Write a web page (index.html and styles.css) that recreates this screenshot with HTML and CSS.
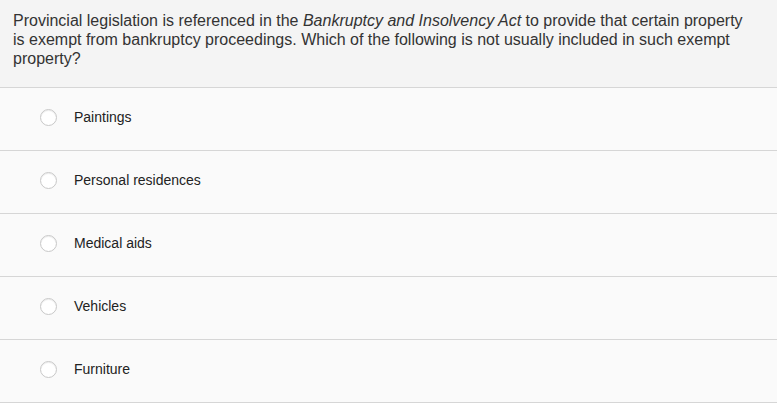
FILE: index.html
```html
<!DOCTYPE html>
<html>
<head>
<meta charset="utf-8">
<link rel="stylesheet" href="styles.css">
</head>
<body>
<div class="question">
  <div class="stem">Provincial legislation is referenced in the <em>Bankruptcy and Insolvency Act</em> to provide that certain property is exempt from bankruptcy proceedings. Which of the following is not usually included in such exempt property?</div>
  <ul class="options">
    <li class="option"><span class="radio"></span><span class="label">Paintings</span></li>
    <li class="option"><span class="radio"></span><span class="label">Personal residences</span></li>
    <li class="option"><span class="radio"></span><span class="label">Medical aids</span></li>
    <li class="option"><span class="radio"></span><span class="label">Vehicles</span></li>
    <li class="option"><span class="radio"></span><span class="label">Furniture</span></li>
  </ul>
</div>
</body>
</html>
```
FILE: styles.css
```css
html, body {
  margin: 0;
  padding: 0;
  background: #ffffff;
}
body {
  font-family: "Liberation Sans", Arial, sans-serif;
  color: #333333;
}
.question {
  width: 777px;
  background: #fafafa;
}
.stem {
  background: #f4f4f4;
  height: 88px;
  box-sizing: border-box;
  padding: 11px 30px 0 13px;
  font-size: 16px;
  line-height: 19px;
  color: #333333;
  border-bottom: 1px solid #d6d6d6;
}
.stem em {
  font-style: italic;
}
.options {
  list-style: none;
  margin: 0;
  padding: 0;
}
.option {
  display: flex;
  align-items: center;
  border-bottom: 1px solid #d6d6d6;
  padding-left: 40px;
  padding-bottom: 4px;
  height: 58px;
}
.radio {
  width: 15px;
  height: 15px;
  border-radius: 50%;
  border: 1px solid #c8c8c8;
  background: #ffffff;
  box-shadow: inset 0 1px 1px rgba(0,0,0,0.08);
  flex: none;
}
.label {
  margin-left: 17px;
  font-size: 14px;
  color: #222222;
}
```
